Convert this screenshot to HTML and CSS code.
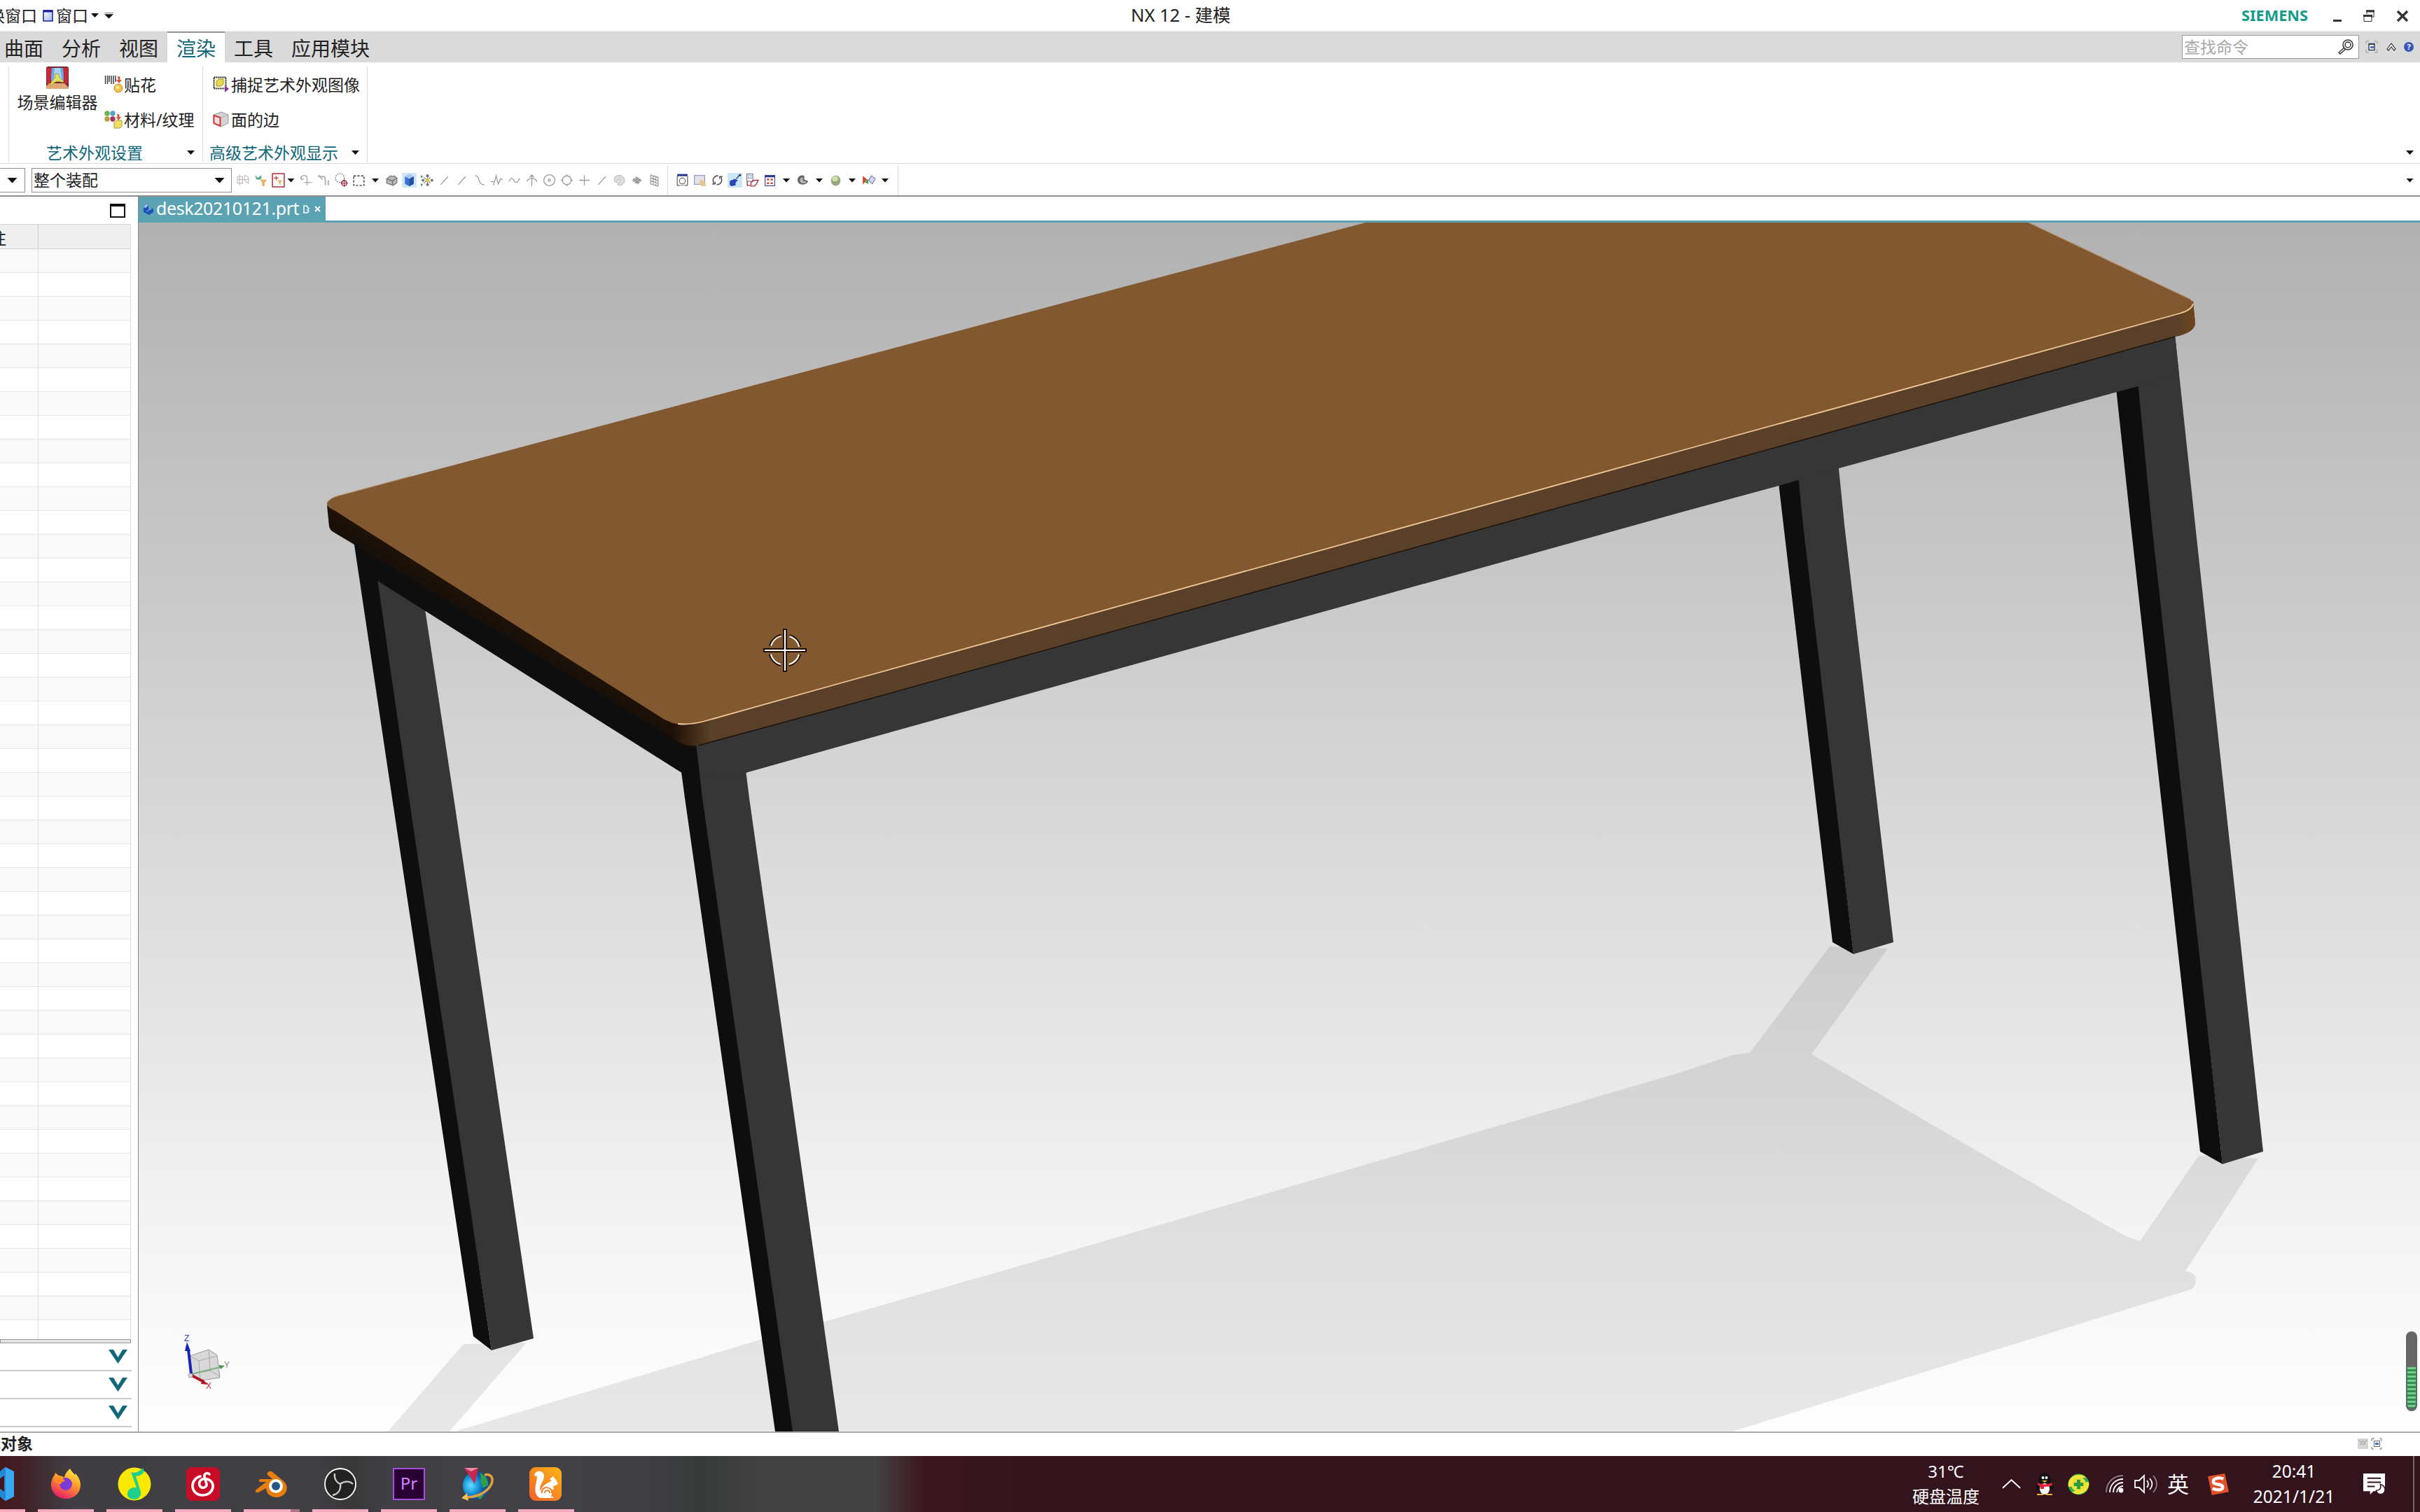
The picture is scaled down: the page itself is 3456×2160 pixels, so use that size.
FILE: index.html
```html
<!DOCTYPE html>
<html lang="zh-CN">
<head>
  <meta charset="UTF-8" />
  <title>NX 12 - 建模</title>
  <link rel="stylesheet" href="styles.css">
</head>
<body>
  <!-- Title bar -->
  <header class="titlebar">
    <div class="quick">
      <span class="cut">切换窗口</span>
      <svg class="win-icon" width="15" height="17" viewBox="0 0 15 17"><defs><linearGradient id="wg" x1="0" y1="0" x2="1" y2="1"><stop offset="0" stop-color="#fff"/><stop offset="1" stop-color="#9dbcf5"/></linearGradient></defs><rect x="1" y="1" width="13" height="15" fill="url(#wg)" stroke="#1c1ca0" stroke-width="1.5"/><path d="M1 2h13" stroke="#1c1ca0" stroke-width="3"/></svg>
      <span>窗口</span>
      <i class="arrow"></i>
      <i class="arrow over"></i>
    </div>
    <div class="title">NX 12 - 建模</div>
    <div class="win-buttons">
      <svg width="98" height="28" viewBox="0 -4 98 28"><text class="siemens" x="1" y="17" textLength="95" lengthAdjust="spacingAndGlyphs">SIEMENS</text></svg>
      <svg class="controls" width="110" height="20" viewBox="0 0 110 20"><path d="M1 16.500h12" stroke="#333" stroke-width="3"/><g fill="none" stroke="#333"><path d="M49 7V2h10v9h-4"/><path d="M48 3h12" stroke-width="3"/><path d="M45 9.500h11v8H45z"/><path d="M44 9.500h13" stroke-width="3"/></g><path d="M93 3l14 14M107 3L93 17" stroke="#333" stroke-width="3.400"/></svg>
    </div>
  </header>

  <!-- Ribbon tabs -->
  <nav class="tabs">
    <span>曲面</span><span>分析</span><span>视图</span><span class="active">渲染</span><span>工具</span><span>应用模块</span>
    <div class="search">
      <label>查找命令</label>
      <svg width="22" height="22" viewBox="0 0 22 22" fill="none" stroke="#333" stroke-width="1.500"><circle cx="14" cy="8" r="7"/><circle cx="14" cy="8" r="4"/><path d="M9 12l-8 7 2 2 8-7"/></svg>
    </div>
    <div class="tab-tools">
      <svg width="18" height="18" viewBox="0 0 18 18" fill="none"><path d="M1 5V1h4M13 1h4v4M17 13v4h-4M5 17H1v-4" stroke="#999"/><rect x="5" y="4.500" width="8" height="9" fill="#fff" stroke="#345" stroke-width="1.500"/><path d="M5 5h8" stroke="#345" stroke-width="2"/><path d="M7 8h5v3H7z" fill="#4472d0"/></svg>
      <svg width="14" height="12" viewBox="0 0 14 12" fill="#fff" stroke="#333" stroke-width="1.200"><path d="M1 9l6-8 6 8-2 2-4-5-4 5z"/></svg>
      <b class="help">?</b>
    </div>
  </nav>

  <!-- Ribbon groups -->
  <section class="ribbon">
    <div class="group stub"><span class="comma">,</span></div>
    <div class="group appearance">
      <div class="group-body">
        <div class="big">
          <svg width="32" height="32" viewBox="0 0 32 32"><rect width="32" height="32" rx="3" fill="#7a2630"/><path d="M7 2h18v20H7z" fill="#66a9e6"/><path d="M12 2l8 0 3 20H10z" fill="#a9d3f5"/><path d="M1 2h7l-2 22H1zM31 2h-7l2 22h5z" fill="#c7283a"/><path d="M0 28l4-4h22l6 6v2H0z" fill="#e0a873"/><path d="M12 11l5-1 3 7 5 4-1 2-6-2-5 1-6 5-2-1 4-6 4-4z" fill="#e6e05e" stroke="#8a8220" stroke-width=".7"/></svg>
          <span>场景编辑器</span>
        </div>
        <div class="col">
          <div class="cmd"><svg width="28" height="26" viewBox="0 0 28 26"><path d="M1.500 0v12M4.500 0v12M7 0v9M10 0v12M13 0v12M16 0v9" stroke="#333" stroke-width="1.400"/><path d="M19 1c4 0 4 2 3 5h3l-4 5-4-5h3" fill="#d2552d"/><circle cx="20" cy="18" r="6" fill="#f2c14a" stroke="#c08a2b"/><circle cx="19" cy="17" r="2.500" fill="#fbe7a0"/></svg><span>贴花</span></div>
          <div class="cmd"><svg width="28" height="26" viewBox="0 0 28 26"><circle cx="4" cy="4" r="3.700" fill="#6db24c"/><circle cx="12" cy="4" r="3.700" fill="#55a0c8"/><circle cx="4" cy="12" r="3.700" fill="#b5a04a"/><circle cx="12" cy="12" r="3.700" fill="#a2345c"/><path d="M18 5c4 0 4 2 3 4h3l-4 5-3-5h2" fill="#d2552d"/><path d="M14 17l4-3h7v8l-3 3h-8z" fill="#eedf63" stroke="#a89a35"/></svg><span>材料/纹理</span></div>
        </div>
      </div>
      <div class="caption"><span>艺术外观设置</span><i class="arrow"></i></div>
    </div>
    <div class="group display">
      <div class="group-body">
        <div class="col">
          <div class="cmd"><svg width="25" height="24" viewBox="0 0 25 24"><rect x="1.500" y="1.500" width="17" height="16" fill="#fffbe2" stroke="#222" stroke-width="2" stroke-dasharray="2 1"/><path d="M5 7l3-3h7v7l-3 3H5z" fill="#e8d84e" stroke="#a2932c"/><path d="M17 13l6 5-6 5z" fill="#8a37a0"/></svg><span>捕捉艺术外观图像</span></div>
          <div class="cmd"><svg width="25" height="24" viewBox="0 0 25 24"><path d="M1 5l11-4 10 4v12l-11 5L1 17z" fill="#d4d4d4" stroke="#999"/><path d="M1.500 6l9 3v12l-9-4z" fill="#f6dfdf" stroke="#cc3c3c" stroke-width="2"/><path d="M11 9l11-4" stroke="#aaa"/></svg><span>面的边</span></div>
        </div>
      </div>
      <div class="caption"><span>高级艺术外观显示</span><i class="arrow"></i></div>
    </div>
    <i class="arrow more"></i>
  </section>

  <!-- Selection toolbar -->
  <section class="toolbar">
    <div class="combo left"><i class="arrow big-arrow"></i></div>
    <div class="combo"><span>整个装配</span><i class="arrow big-arrow"></i></div>
    <div class="icons">
      <svg viewBox="0 0 20 20" stroke="#b8b8b8" fill="none"><path d="M2 5h7v9H2zM5 2v15M2 9h16M12 3l5 3v8l-5-3z"/></svg>
      <svg viewBox="0 0 20 20"><path d="M2 3l4 4 5-4-1 6H4z" fill="#51a38f"/><path d="M9 9h9l-3 5v4h-3v-4z" fill="#edb15c"/></svg>
      <svg viewBox="0 0 20 20" fill="none"><rect x="2" y="1" width="16" height="18" stroke="#b2383e" stroke-width="1.500"/><path d="M4 7h6M7 4v6" stroke="#b2383e"/><path d="M9 10h7l-3 3v4z" fill="#edb15c"/></svg>
      <i class="slot near"><i class="arrow"></i></i>
      <svg viewBox="0 0 20 20" stroke="#aaa" stroke-width="1.300" fill="none"><path d="M3 8c0-6 8-6 8 0v9M7 13h10M2 5l1 4 4-1"/></svg>
      <svg viewBox="0 0 20 20" stroke="#b5b5b5" stroke-width="2" fill="none"><path d="M2 5h9l1 5v7M16 10v7M3 3l5 6"/></svg>
      <svg viewBox="0 0 20 20" fill="none"><circle cx="8" cy="7" r="6" stroke="#444" stroke-dasharray="1.500 1.500"/><circle cx="14" cy="14" r="3.500" stroke="#a02038" stroke-width="1.300"/><path d="M9 14h10M14 9v10" stroke="#a02038"/></svg>
      <svg viewBox="0 0 20 20" fill="none"><rect x="3" y="4" width="14" height="13" stroke="#333" stroke-width="1.300" stroke-dasharray="3 2"/></svg>
      <i class="slot"><i class="arrow"></i></i>
      <svg viewBox="0 0 20 20" fill="#b9b9b9" stroke="#666"><path d="M3 8l5-4 4 1 1-1 4 3v6l-5 4-9-3z"/><path d="M3 8l8 3 6-4M11 11v6" fill="none"/></svg>
      <svg class="on" viewBox="0 0 20 20"><path d="M4 5l6-3 6 3v10l-6 3-6-3z" fill="#3c73d2"/><path d="M4 5l6-3 6 3-6 3z" fill="#a8c8f6"/><path d="M10 8l6-3v10l-6 3z" fill="#2450a4"/></svg>
      <svg viewBox="0 0 20 20"><path d="M6 6l9 8M15 6l-9 8M11 4v12" stroke="#777"/><path d="M2 3l3 2-3 2zM2 14l3 2-3 2z" fill="#3d9b4a"/><g fill="#777"><circle cx="11" cy="4" r="2"/><circle cx="11" cy="16" r="2"/><circle cx="17" cy="10" r="2"/><circle cx="5" cy="10" r="2"/></g><circle cx="11" cy="10" r="2.500" fill="#ddc93c"/></svg>
      <svg viewBox="0 0 20 20" class="sketch"><path d="M5 16L15 5"/></svg>
      <svg viewBox="0 0 20 20" class="sketch"><path d="M5 16L15 5"/></svg>
      <svg viewBox="0 0 20 20" class="sketch"><path d="M4 4c8-1 3 13 13 12"/></svg>
      <svg viewBox="0 0 20 20" class="sketch"><path d="M2 12h5L9 4l3 11 3-7 3 1M6 13v4"/></svg>
      <svg viewBox="0 0 20 20" class="sketch"><path d="M3 12c3-9 6-3 7-1s5 4 7-4"/></svg>
      <svg viewBox="0 0 20 20" class="sketch"><path d="M10 2v16M3 12c2-6 12-6 14 0M7 6l3-3 3 3"/></svg>
      <svg viewBox="0 0 20 20" class="sketch"><circle cx="10" cy="10" r="7.500"/><circle cx="10" cy="10" r="1.500"/></svg>
      <svg viewBox="0 0 20 20" class="sketch"><circle cx="10" cy="10" r="6"/><path d="M10 2v3M10 15v3M2 10h3M15 10h3"/></svg>
      <svg viewBox="0 0 20 20" class="sketch"><path d="M10 3v14M3 10h14"/></svg>
      <svg viewBox="0 0 20 20" class="sketch"><path d="M5 16L15 5"/></svg>
      <svg viewBox="0 0 20 20"><path d="M3 9c0-8 13-7 14 0s-7 9-9 7 4-4 3-6-4 0-4 2-4 1-4-3z" fill="#ddd" stroke="#bbb"/></svg>
      <svg viewBox="0 0 20 20"><path d="M3 10l6-5 8 5-6 6z" fill="#bbb"/><path d="M5 8l8 6M9 5l6 6M5 12l7-5M8 14l7-6" stroke="#888"/></svg>
      <svg viewBox="0 0 20 20" class="sketch"><path d="M5 3l10 3v12L5 15zM8.500 4v12M12 5v12M5 7l10 3M5 11l10 3"/></svg>
    </div>
    <div class="icons second">
      <svg viewBox="0 0 20 20" fill="none"><path d="M3 3h14" stroke="#2b3990" stroke-width="3"/><path d="M3 4v13M17 4v13M3 17h3M14 17h3" stroke="#444"/><circle cx="10" cy="11" r="4" stroke="#555"/><path d="M6 17h8" stroke="#999"/></svg>
      <svg viewBox="0 0 20 20"><rect x="2.500" y="3.500" width="14" height="12" fill="#e2e2ee" stroke="#8a8ab8"/><path d="M9 12l3-3 6 4v5h-6z" fill="#e4c68e"/></svg>
      <svg viewBox="0 0 20 20" fill="none" stroke="#555" stroke-width="1.600"><path d="M6 15C2 10 5 4 11 4M14 5c4 5 1 11-5 11"/><path d="M3 15h4v-3M13 8V5h4" stroke-width="1.200"/></svg>
      <svg class="on" viewBox="0 0 20 20"><path d="M3 11l7-3 4 2-3 3v4l-6 1-2-2z" fill="#2548b4"/><path d="M12 8l5-6" stroke="#555" stroke-width="1.500"/><circle cx="17" cy="3" r="1.500" fill="#24418a"/></svg>
      <svg viewBox="0 0 20 20" fill="none"><rect x="2.500" y="1.500" width="8" height="10" stroke="#667"/><path d="M4 4h2M7 4h2M4 7h2M7 7h2" stroke="#446ac0"/><path d="M3 12v5h4M8 13l4-3h6l-2 4-3 4H8z" stroke="#a83240" stroke-width="1.300"/></svg>
      <svg viewBox="0 0 20 20"><rect x="3.500" y="3.500" width="13" height="14" fill="#fff" stroke="#2b3990"/><path d="M3 4.500h14" stroke="#2b3990" stroke-width="3"/><path d="M6 9h3M11 9h3M6 14h3M11 14h3" stroke="#c24545" stroke-width="2.500"/></svg>
      <i class="slot"><i class="arrow"></i></i>
      <svg viewBox="0 0 20 20"><path d="M3 11c-1-7 6-9 9-7v5l5 2c0 5-12 8-14 0z" fill="#666"/><path d="M6 11c0-3 2-5 4-5v5l5 1c-1 3-8 3-9-1z" fill="#bbb"/></svg>
      <i class="slot"><i class="arrow"></i></i>
      <svg viewBox="0 0 20 20"><ellipse cx="10" cy="10.500" rx="6.500" ry="7" fill="#95a880"/><ellipse cx="9" cy="8" rx="4" ry="3.500" fill="#d2e0a5"/></svg>
      <i class="slot"><i class="arrow"></i></i>
      <svg viewBox="0 0 20 20"><path d="M2 4l6 5-6 7z" fill="#c84a3a"/><path d="M5 13l4-5 1 7z" fill="#4c9c48"/><path d="M10 10l4-6 5 4-4 7z" fill="#d8daf0" stroke="#6a6ea8"/></svg>
      <i class="slot"><i class="arrow"></i></i>
    </div>
    <i class="arrow more"></i>
  </section>

  <main>
    <!-- Navigator panel -->
    <aside class="navigator">
      <div class="nav-head"><i class="maximize"></i></div>
      <div class="table">
        <div class="thead"><span>注</span></div>
        <div class="rows"></div>
      </div>
      <div class="splitter"></div>
      <div class="fold"><svg viewBox="0 0 27 20"><path d="M0 0h7l6.500 11L20 0h7L13.500 20z"/></svg></div>
      <div class="fold"><svg viewBox="0 0 27 20"><path d="M0 0h7l6.500 11L20 0h7L13.500 20z"/></svg></div>
      <div class="fold"><svg viewBox="0 0 27 20"><path d="M0 0h7l6.500 11L20 0h7L13.500 20z"/></svg></div>
    </aside>

    <section class="work">
      <div class="doc-tabs">
        <div class="doc">
          <svg width="15" height="16" viewBox="0 0 15 16"><path d="M1 5l4-4 3 1v7l5-3 2 2v4l-6 4-8-4z" fill="#1b50b8"/><path d="M1 5l4-4 3 1-4 4z" fill="#a9c7ff"/><path d="M5 11l8-4" stroke="#8fb5ff"/></svg>
          <span>desk20210121.prt</span>
          <svg width="9" height="12" viewBox="0 0 9 12" fill="none" stroke="#fff" stroke-width="1.500"><path d="M1 1h4l3 4-2 2 2 2-2 2H1z"/></svg>
          <svg width="9" height="9" viewBox="0 0 9 9" stroke="#fff" stroke-width="1.800"><path d="M1 1l7 7M8 1L1 8"/></svg>
        </div>
      </div>

      <!-- Model view; scene units are screen pixels -->
      <div class="canvas">
        <svg class="scene" viewBox="198 318 3258 1727" preserveAspectRatio="none">
          <defs>
            <linearGradient id="bg" x1="0" y1="0" x2="0" y2="1">
              <stop offset="0" stop-color="#b1b1b1"/>
              <stop offset=".25" stop-color="#c5c5c5"/>
              <stop offset=".48" stop-color="#d7d7d7"/>
              <stop offset=".6" stop-color="#e0e0e0"/>
              <stop offset=".85" stop-color="#f5f5f5"/>
              <stop offset="1" stop-color="#fefefe"/>
            </linearGradient>
            <linearGradient id="side" gradientUnits="userSpaceOnUse" x1="720" y1="885" x2="695" y2="925">
              <stop offset="0" stop-color="#1e1107"/>
              <stop offset="1" stop-color="#0e0e0e"/>
            </linearGradient>
            <linearGradient id="front" gradientUnits="userSpaceOnUse" x1="960" y1="0" x2="1015" y2="0">
              <stop offset="0" stop-color="#1c1007"/>
              <stop offset=".35" stop-color="#331f0e"/>
              <stop offset="1" stop-color="#5a4029"/>
            </linearGradient>
            <linearGradient id="corner" gradientUnits="userSpaceOnUse" x1="3100" y1="0" x2="3136" y2="0">
              <stop offset="0" stop-color="#5a4029" stop-opacity="0"/>
              <stop offset="1" stop-color="#704619"/>
            </linearGradient>
          </defs>
          <rect x="198" y="318" width="3258" height="1727" fill="url(#bg)"/>

          <!-- floor shadow -->
          <path class="shadow" d="M2613 1352L2499 1504L2475 1507L2400 1532L1440 1813L1177 1888L1085 1914L649 2045H2474L3129 1842Q3136 1838 3136 1828T3121 1816L3225 1655L3140 1651L3056 1773L3034 1765L2859 1665L2587 1506L2696 1355z"/>
          <path class="shadow" d="M662 1920L554 2045H642L752 1918z"/>

          <!-- legs -->
          <path class="light" d="M536 822L606 864L648 1140L762 1912L702 1929L582 1140z"/>
          <path class="dark" d="M504 765L560 1140L676 1909L702 1929L584 1140L538 820z"/>
          <path class="light" d="M992 1060L1065 1100L1070 1140L1198 2045H1129L1001 1140z"/>
          <path class="dark" d="M972 1095L978 1140L1107 2045H1132L1003 1140L994 1060z"/>
          <path class="light" d="M2566 680L2625 660L2634 750L2704 1346L2647 1363L2573 750z"/>
          <path class="dark" d="M2540 690L2547 750L2617 1346L2647 1363L2575 750L2568 680z"/>
          <path class="light" d="M3051 545L3106 478L3135 750L3232 1645L3174 1663L3071 750z"/>
          <path class="dark" d="M3022 555L3043 750L3142 1645L3174 1663L3073 750L3053 545z"/>

          <!-- frame rails -->
          <path class="light" d="M994 1064L1200 1008L2400 675L3106 478L3112 536L3053 552L3023 560L2626 669L2540 694L2400 732L1200 1066L1065 1104L1000 1110z"/>
          <path class="dark" d="M506 750L980 1036L994 1064L999 1110L972 1103L538 829L520 815L506 778z"/>

          <!-- table top -->
          <path fill="url(#side)" d="M467 722L470 752Q471 757 476 760L506 778L965 1057Q975 1064 985 1064V1034L479 728z"/>
          <path fill="url(#front)" d="M955 1028L960 1054Q978 1068 997 1065L1200 1010L2400 677L3106 481Q3132 476 3135 463L3132 430L1100 1000z"/>
          <path fill="url(#corner)" d="M3100 448L3100 483L3106 481Q3132 476 3135 463L3132 430z"/>
          <path class="seam" d="M997 1065L1200 1010L2400 677L3106 481"/>
          <path class="top" d="M479 730Q466 724 467 719Q470 711 488 707L1950 318H2897L3127 427Q3136 434 3130 440Q3126 445 3112 448L2400 644L1200 976L1007 1030Q972 1039 956 1031L949 1028z"/>
          <path class="highlight" d="M968 1034Q985 1036 1007 1030L1200 976L2400 644L3112 448Q3130 443 3132 434"/>
          <path class="rim" d="M467 719Q470 711 488 707L588 680M2897 318L3127 427"/>

          <!-- pick cursor -->
          <g fill="none"><g stroke="#1d0f06"><path d="M1121 898v62M1090 929h62" stroke-width="6"/><circle cx="1121" cy="929" r="22.500" stroke-width="3" stroke-dasharray="23.300 12" stroke-dashoffset="-6"/></g><g stroke="#fff"><path d="M1121 900v58M1092 929h58" stroke-width="2.200"/><circle cx="1121" cy="929" r="21" stroke-width="2" stroke-dasharray="21 12" stroke-dashoffset="-6"/></g></g>

          <!-- view triad -->
          <g class="triad">
            <path d="M271 1937l27-9 12 8 4 32-26 4-13-7z" fill="#ccc" fill-opacity=".75" stroke="#999"/>
            <path d="M271 1937l13 7 26-7M284 1944l2 28M298 1928l2 30 14 8M300 1958l-25 5" fill="none" stroke="#aaa"/>
            <path d="M273 1963l42-10" stroke="#82ad83" stroke-width="2"/><path d="M312 1950l9 1-6 5z" fill="#4d9453"/>
            <path d="M273 1963l-4-35" stroke="#1626b8" stroke-width="4"/><path d="M267 1917l5 13h-8z" fill="#1626b8"/>
            <path d="M274 1965l17 9" stroke="#b3152c" stroke-width="4"/><path d="M289 1970l8 8-10-1z" fill="#b3152c"/>
            <circle cx="272" cy="1965" r="3" fill="#ddd" stroke="#999"/>
            <text x="263" y="1916" fill="#3640c8">Z</text><text x="320" y="1954" fill="#888">Y</text><text x="294" y="1984" fill="#c02c3c">X</text>
          </g>
        </svg>
        <div class="meter"><i></i></div>
      </div>
    </section>
  </main>

  <!-- Status line -->
  <footer class="status">
    <span>择对象</span>
    <svg width="36" height="18" viewBox="0 0 36 18" fill="none"><rect x="1" y="1" width="15" height="15" fill="#d4d4d4"/><path d="M3 4l3 3 2-3 3 3 3-4M4 9h9" stroke="#999"/><path d="M21 5V1h4M32 1h3v4M35 13v3h-3M24 16h-3v-3" stroke="#777"/><rect x="24.500" y="4.500" width="8" height="8" fill="#fff" stroke="#5a6a80"/><path d="M26 7h5v3h-5z" fill="#4472b8"/></svg>
  </footer>

  <!-- Windows taskbar -->
  <footer class="taskbar">
    <div class="apps">
      <div class="app first"><svg viewBox="0 0 48 48"><path d="M33 0l13 6v36l-13 6-26-22 5-5 20 14V12L12 26l-5-4z" fill="#2489d3"/><path d="M34 0l12 6v36l-12 6z" fill="#3aaaf0"/></svg></div>
      <div class="app"><svg viewBox="0 0 48 48"><defs><linearGradient id="ff" x1=".8" y1="0" x2=".3" y2="1"><stop offset="0" stop-color="#fff14a"/><stop offset=".45" stop-color="#ff9a26"/><stop offset="1" stop-color="#e8196c"/></linearGradient></defs><path d="M30 2c2 4 5 6 7 9l1-2c4 5 7 10 7 16 0 12-9 20-21 20S3 36 3 25c0-6 2-10 5-14l1-3 5 4c2 0 6 1 8 3 0-5 4-9 8-13z" fill="url(#ff)"/><circle cx="24" cy="24" r="9" fill="#7c3bd6"/><path d="M8 17c7-4 13-1 15 3-3 0-5 1-6 4-5 0-9-2-9-7z" fill="#ff8a25"/></svg></div>
      <div class="app"><svg viewBox="0 0 48 48"><circle cx="24" cy="24" r="23.500" fill="#fbe900"/><path d="M19 7c7 2 13-1 17-6l2 5c-3 5-7 6-12 7l7 22c1 6-3 11-9 11-7 0-11-4-10-9 1-6 7-9 13-8z" fill="#1fd08c"/></svg></div>
      <div class="app"><svg viewBox="0 0 48 48"><rect width="48" height="48" rx="8" fill="#c90c26"/><path d="M20 13C5 17 5 38 22 40c17 1 22-19 8-23-8-2-13 3-11 9 3 6 11 3 10-2l-3-10c-1-5 4-7 7-4" fill="none" stroke="#fff" stroke-width="3.600" stroke-linecap="round"/></svg></div>
      <div class="app split"><svg viewBox="0 0 48 48"><path d="M24 6l17 14c10 9 3 23-10 23-9 0-15-6-15-13L5 36c-3 1-6-2-3-4l14-11H8c-3 0-3-4 0-4h17l-7-6c-2-3 2-6 6-5z" fill="#e87d0d"/><circle cx="30" cy="27" r="10" fill="#fff"/><circle cx="30" cy="27" r="6" fill="#265787"/></svg></div>
      <div class="app"><svg viewBox="0 0 48 48"><circle cx="24" cy="24" r="22" fill="#222" stroke="#fff" stroke-width="1.800"/><path d="M16 9c-1 8 3 13 8 15 6-5 14-4 18 0M24 24c1 8-3 14-11 16" fill="none" stroke="#ccc" stroke-width="2.400"/></svg></div>
      <div class="app"><svg viewBox="0 0 48 48"><rect x="2" y="2" width="44" height="44" fill="#2a0034" stroke="#a64ed8" stroke-width="2"/><text x="24" y="32" class="pr">Pr</text></svg></div>
      <div class="app"><svg viewBox="0 0 48 48"><defs><radialGradient id="globe" cx=".3" cy=".5"><stop offset="0" stop-color="#6df"/><stop offset=".6" stop-color="#1592d8"/><stop offset="1" stop-color="#1350a0"/></radialGradient></defs><ellipse cx="22" cy="26" rx="19" ry="20" fill="url(#globe)"/><path d="M27 8c9 4 12 9 12 18l-8 4c1-6-5-8-2-14zM23 42l10-3-5 7z" fill="#2fa04a"/><path d="M5 1h20l-5 23z" fill="#c8284e"/><path d="M5 1h20l-10 5z" fill="#f08ba6"/><path d="M34 11c12-3 15 9 5 20-8 8-18 12-32 12" fill="none" stroke="#e0a238" stroke-width="3.500"/><path d="M9 37l-8 7 10 4z" fill="#f2c057"/></svg></div>
      <div class="app"><svg viewBox="0 0 48 48"><defs><linearGradient id="uc" x1="1" y1="0" x2="0" y2="1"><stop offset="0" stop-color="#fdb615"/><stop offset="1" stop-color="#f2602a"/></linearGradient></defs><rect width="46" height="48" rx="9" fill="url(#uc)"/><path d="M7 12c1-9 15-8 14 2-1 8-8 12-5 20 3-10 11-11 16-15l-3-2 5-4 4 5 3 6-8 4c4 2 1 5-1 5 2 4-1 7-1 9h3v2H15C3 36 11 24 11 13z" fill="#fff"/><path d="M18 37c-2-11 16-10 14 0M22 37c0-5 7-5 7 0" fill="none" stroke="#f58026" stroke-width="2"/></svg></div>
    </div>
    <div class="tray">
      <div class="temp"><span>31℃</span><span>硬盘温度</span></div>
      <svg class="t-up" viewBox="0 0 28 14"><path d="M1 13L14 1l13 12" fill="none" stroke="#fff" stroke-width="2"/></svg>
      <svg class="t-qq" viewBox="0 0 26 32"><path d="M4 13C4-4 22-4 22 13l4 8-2 4-3-3-2 7H7l-2-7-3 3-2-4z" fill="#111"/><ellipse cx="13" cy="23" rx="7" ry="8" fill="#fff"/><circle cx="10.500" cy="7" r="2" fill="#fff"/><circle cx="15.500" cy="7" r="2" fill="#fff"/><path d="M9 11h8l-4 3zM2 30h9v2H2zM15 30h9v2h-9z" fill="#f2b62e"/><path d="M3 14q10 5 20 0l1 4q-5 2-12 2v3H7v-4l-4-1z" fill="#e0233a"/></svg>
      <svg class="t-360" viewBox="0 0 32 32"><circle cx="16" cy="16" r="15.500" fill="#2cae46"/><path d="M27 6C16-4-2 6 1 19c6 5 9-12 26-13zM6 27c11 9 27-1 25-14-6-4-9 12-25 14z" fill="#f9e33a"/><circle cx="16" cy="16" r="11" fill="#e9e23a"/><path d="M16 9v14M9 16h14" stroke="#2a9c3f" stroke-width="5"/></svg>
      <svg class="t-wifi" viewBox="0 0 26 26" fill="none" stroke="#fff" stroke-width="1.800"><path d="M1 25C1 11 11 1 25 1" opacity=".45"/><path d="M6 25c0-11 8-19 19-19M11 25c0-8 6-14 14-14M16 25c0-5 4-9 9-9"/><circle cx="22" cy="22" r="2.500" fill="#fff"/></svg>
      <svg class="t-vol" viewBox="0 0 34 30" fill="none" stroke="#fff" stroke-width="1.800"><path d="M1 10h6l7-7v24l-7-7H1z"/><path d="M18 10q4 5 0 10M22 7q7 8 0 16"/><path d="M27 3q10 12 0 24" opacity=".45"/></svg>
      <span class="t-ime">英</span>
      <svg class="t-sogou" viewBox="0 0 32 32"><path d="M1 4l25-4 6 27-25 5z" fill="#e0512b"/><path d="M24 8c-7-3-15-1-15 4s14 3 14 8-9 5-15 2" fill="none" stroke="#fff" stroke-width="4.500"/></svg>
      <div class="clock"><span>20:41</span><span>2021/1/21</span></div>
      <svg class="t-note" viewBox="0 0 34 34"><path d="M1 1h32v21a8 8 0 0 1-12 5h-5l-5 5v-5H1z" fill="#fff"/><path d="M7 8h20M7 14h20M7 20h11" stroke="#33141d" stroke-width="2"/><path d="M26 17c2 6-1 9-6 9 2 8 12 7 13-1 0-4-3-7-7-8z" fill="#fff" stroke="#33141d" stroke-width="1.500"/></svg>
    </div>
  </footer>
</body>
</html>
```

FILE: styles.css
```css
* {
  box-sizing: border-box;
}

body {
  margin: 0;
  width: 3456px;
  height: 2160px;
  overflow: hidden;
  display: flex;
  flex-direction: column;
  background: #fff;
  color: #222;
  font-family: "Noto Sans", "Noto Sans CJK SC", sans-serif;
  font-size: 23px;
  line-height: 1;
  white-space: nowrap;
}

svg {
  display: block;
  flex: none;
}

.arrow {
  flex: none;
  display: block;
  width: 11px;
  height: 6px;
  background: #111;
  clip-path: polygon(0 0, 100% 0, 50% 100%);
}

.big-arrow {
  width: 15px;
  height: 8px;
}

/* Title bar */
.titlebar {
  height: 45px;
  flex: none;
  display: flex;
  align-items: center;
  border-bottom: 1px solid #eee;
}

.quick {
  display: flex;
  align-items: center;
  width: 1654px;
  height: 45px;
  margin-left: -39px;
}

.win-icon {
  margin: 0 4px 0 8px;
}

.quick .arrow {
  margin-left: 4px;
}

.quick .over {
  width: 13px;
  height: 9px;
  margin-left: 8px;
  clip-path: polygon(0 0, 100% 0, 100% 12%, 0 12%, 0 30%, 100% 30%, 50% 100%, 0 30%);
}

.title {
  font-size: 25.5px;
}

.win-buttons {
  display: flex;
  align-items: center;
  margin-left: auto;
  padding: 2px 15px 0 0;
}

.controls {
  margin-left: 33px;
}

.siemens {
  font-size: 21px;
  font-weight: bold;
  fill: #169b8a;
}

/* Ribbon tabs */
.tabs {
  height: 44px;
  flex: none;
  display: flex;
  align-items: center;
  background: #dadada;
  font-size: 28px;
}

.tabs > span {
  height: 44px;
  padding: 10px 13px 0;
}

.tabs > span:first-child {
  padding-left: 6px;
}

.tabs .active {
  background: #fff;
  border-top: 2px solid #999;
  padding-top: 8px;
  color: #11687a;
}

.search {
  display: flex;
  align-items: center;
  justify-content: space-between;
  width: 253px;
  height: 34px;
  margin-left: auto;
  padding: 0 7px 0 2px;
  background: #fff;
  border: 1px solid #999;
  font-size: 23px;
  color: #a8a8a8;
}

.tab-tools {
  display: flex;
  align-items: center;
  gap: 12px;
  width: 87px;
  padding-left: 9px;
}

.help {
  width: 14px;
  height: 14px;
  margin-left: -1px;
  border-radius: 50%;
  background: #3a56b8;
  color: #fff;
  font-size: 11px;
  line-height: 14px;
  text-align: center;
}

/* Ribbon */
.ribbon {
  height: 145px;
  flex: none;
  display: flex;
  padding-top: 6px;
  border-bottom: 1px solid #d8d8d8;
}

.group {
  display: flex;
  flex-direction: column;
  height: 137px;
  border-right: 1px solid #ddd;
}

.stub {
  width: 13px;
  padding-top: 69px;
}

.comma {
  margin-left: -5px;
}

.appearance {
  width: 277px;
}

.display {
  width: 235px;
}

.group-body {
  display: flex;
  height: 109px;
}

.big {
  display: flex;
  flex-direction: column;
  align-items: center;
  width: 116px;
  margin-left: 11px;
  gap: 8px;
}

.big svg {
  margin-right: 1px;
}

.col {
  display: flex;
  flex-direction: column;
  gap: 24px;
  padding-top: 13px;
}

.appearance .col {
  margin-left: 9px;
}

.display .col {
  padding-left: 14px;
}

.cmd {
  display: flex;
  align-items: center;
  height: 26px;
}

.display .cmd span {
  margin-left: 1px;
}

.caption {
  display: flex;
  align-items: center;
  justify-content: space-between;
  height: 28px;
  color: #11687a;
}

.appearance .caption {
  padding: 0 11px 0 53px;
}

.display .caption {
  padding: 0 11px 0 9px;
}

.more {
  margin-left: auto;
  margin-right: 9px;
}

.ribbon .more {
  margin-top: 120px;
}

/* Selection toolbar */
.toolbar {
  height: 47px;
  flex: none;
  display: flex;
  align-items: center;
  padding-top: 2px;
  border-bottom: 2px solid #8e8e8e;
}

.combo {
  display: flex;
  align-items: center;
  justify-content: space-between;
  width: 286px;
  height: 35px;
  padding: 0 9px 0 2px;
  border: 1px solid #8e8e8e;
}

.combo.left {
  width: 36px;
  margin-right: 9px;
  padding-left: 10px;
  border-left: 0;
}

.icons {
  display: flex;
  align-items: center;
  height: 42px;
  padding: 0 6px 0 4px;
  border-right: 1px solid #ddd;
}

.icons.second {
  padding: 0 7px 0 8px;
}

.icons svg {
  width: 21px;
  height: 21px;
  margin: 0 2px;
}

.icons .on {
  background: #cce6f5;
}

.slot {
  display: flex;
  align-items: center;
  justify-content: center;
  width: 22px;
}

.slot.near {
  width: 15px;
  justify-content: flex-start;
}

.sketch {
  fill: none;
  stroke: #999;
  stroke-width: 1.2;
}

/* Main area */
main {
  flex: 1;
  display: flex;
  min-height: 0;
  border-bottom: 2px solid #aaa;
}

.navigator {
  width: 198px;
  flex: none;
  border-right: 1px solid #888;
}

.nav-head {
  height: 39px;
  padding: 10px 0 0 157px;
}

.maximize {
  display: block;
  width: 22px;
  height: 20px;
  border: 2px solid #111;
  border-top-width: 4px;
}

.table {
  width: 187px;
  height: 1593px;
  border-right: 1px solid #ddd;
}

.thead {
  height: 36px;
  padding: 8px 0;
  border: 1px solid #d4d4d4;
  border-width: 1px 0;
  background: linear-gradient(90deg, #efefef 54px, #ccc 54px, #ccc 55px, #efefef 55px);
}

.thead span {
  margin-left: -14px;
}

.rows {
  height: 1557px;
  background:
    linear-gradient(90deg, transparent 54px, #ddd 54px, #ddd 55px, transparent 55px),
    repeating-linear-gradient(#f9f9f9 0, #f9f9f9 33px, #e6e6e6 33px, #e6e6e6 34px, #fff 34px, #fff 67px, #e6e6e6 67px, #e6e6e6 68px);
}

.splitter {
  width: 187px;
  height: 6px;
  background: #e4e4e4;
  border: 1px solid #999;
}

.fold {
  width: 188px;
  height: 40px;
  padding: 9px 0 0 155px;
  border-bottom: 2px solid #ccc;
}

.fold svg {
  width: 27px;
  height: 20px;
  fill: #11687a;
}

.work {
  flex: 1;
  display: flex;
  flex-direction: column;
  min-width: 0;
}

.doc-tabs {
  height: 37px;
  flex: none;
  border-bottom: 3px solid #5ba3b0;
}

.doc {
  display: flex;
  align-items: center;
  width: 267px;
  height: 35px;
  padding-left: 6px;
  background: #5ba3b3;
  color: #fff;
  font-size: 25px;
  letter-spacing: -.4px;
}

.doc span {
  width: 204px;
  margin: -2px 6px 0 4px;
}

.doc svg + svg {
  margin-left: 7px;
}

.canvas {
  position: relative;
  flex: 1;
  min-height: 0;
}

.scene {
  width: 100%;
  height: 100%;
}

.shadow {
  fill: rgba(0, 0, 0, .085);
}

.dark {
  fill: #0e0e0e;
}

.light {
  fill: #363636;
}

.top {
  fill: #825831;
}

.seam {
  fill: none;
  stroke: #1e140c;
  stroke-width: 1.5;
}

.highlight {
  fill: none;
  stroke: #f0c795;
  stroke-width: 1.8;
}

.rim {
  fill: none;
  stroke: #b08c66;
  stroke-width: 1.2;
}

.triad text {
  font-family: "Liberation Sans", sans-serif;
  font-size: 12px;
}

.meter {
  position: absolute;
  right: 4px;
  bottom: 29px;
  width: 16px;
  height: 114px;
  padding: 51px 2px 4px;
  background: #666;
  border-radius: 8px;
}

.meter i {
  display: block;
  height: 59px;
  border-radius: 0 0 6px 6px;
  background: repeating-linear-gradient(#6fd08c 0 3px, #2f8f4c 3px 6px);
}

/* Status line */
.status {
  height: 33px;
  flex: none;
  display: flex;
  align-items: center;
  justify-content: space-between;
  padding: 0 54px 2px 0;
  font-weight: bold;
}

.status span {
  margin-left: -22px;
}

/* Taskbar */
.taskbar {
  height: 80px;
  flex: none;
  display: flex;
  justify-content: space-between;
  background: linear-gradient(90deg, #45161d 0, #40242a 40px, #403e43 100px, #403f44 450px, #383838 500px, #414046 560px, #414145 900px, #383a3a 1000px, #434344 1100px, #434344 1250px, #3c171e 1320px, #33141d 1500px, #33141d 100%);
}

.apps {
  display: flex;
  gap: 18px;
  margin-left: -44px;
}

.app {
  width: 80px;
  padding: 16px 16px 0;
  border-bottom: 4px solid #f3acbd;
}

.app.first svg {
  margin-left: 2px;
}

.app.split {
  border-image: linear-gradient(90deg, #f3acbd 64px, #a87584 64px) 4;
}

.app svg {
  width: 48px;
  height: 48px;
}

.pr {
  fill: #d587ff;
  font-size: 24px;
  text-anchor: middle;
}

.tray {
  display: flex;
  align-items: center;
  width: 718px;
  margin-right: 8px;
  border-right: 2px solid #7b666c;
  color: #fff;
  font-size: 24px;
}

.temp,
.clock {
  display: flex;
  flex-direction: column;
  align-items: center;
  gap: 12px;
}

.temp {
  width: 98px;
  margin-right: 31px;
}

.clock {
  width: 118px;
  margin: 0 39px 0 34px;
  font-size: 24.5px;
}

.t-up { width: 27px; height: 14px; margin-right: 21px; }
.t-qq { width: 26px; height: 32px; margin-right: 20px; }
.t-360 { width: 31px; height: 31px; margin-right: 23px; }
.t-wifi { width: 26px; height: 26px; margin-right: 15px; }
.t-vol { width: 34px; height: 30px; margin-right: 13px; }
.t-ime { width: 30px; font-size: 31px; margin-right: 27px; }
.t-sogou { width: 31px; height: 31px; }
.t-note { width: 33px; height: 33px; }
```
